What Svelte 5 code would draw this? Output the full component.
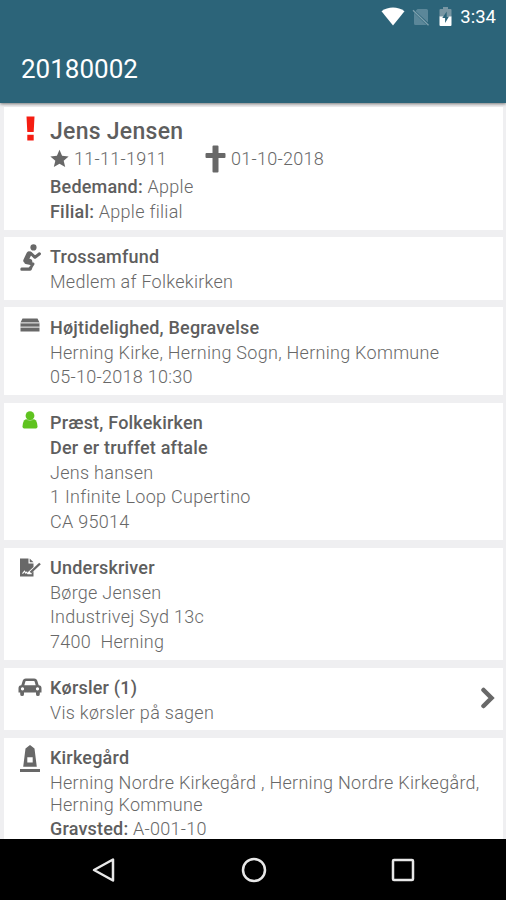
<script lang="ts">
  type Line = { label?: string; text?: string; wrap?: boolean };
  type Section = { icon: string; title: string; lines: Line[]; link?: boolean };

  const caseNumber = '20180002';

  const sections: Section[] = [
    { icon: 'pray', title: 'Trossamfund', lines: [{ text: 'Medlem af Folkekirken' }] },
    {
      icon: 'coffin',
      title: 'Højtidelighed, Begravelse',
      lines: [{ text: 'Herning Kirke, Herning Sogn, Herning Kommune' }, { text: '05-10-2018 10:30' }],
    },
    {
      icon: 'person',
      title: 'Præst, Folkekirken',
      lines: [
        { label: 'Der er truffet aftale' },
        { text: 'Jens hansen' },
        { text: '1 Infinite Loop Cupertino' },
        { text: 'CA 95014' },
      ],
    },
    {
      icon: 'sign',
      title: 'Underskriver',
      lines: [{ text: 'Børge Jensen' }, { text: 'Industrivej Syd 13c' }, { text: '7400  Herning' }],
    },
    { icon: 'car', title: 'Kørsler (1)', lines: [{ text: 'Vis kørsler på sagen' }], link: true },
    {
      icon: 'grave',
      title: 'Kirkegård',
      lines: [
        { text: 'Herning Nordre Kirkegård , Herning Nordre Kirkegård,\nHerning Kommune', wrap: true },
        { label: 'Gravsted:', text: 'A-001-10' },
      ],
    },
  ];
</script>

<div class="screen">
  <header class="top">
    <div class="status">
      <svg class="wifi" viewBox="0 0 24 19"><path d="M0.5 4.2C7-.8 17-.8 23.5 4.2L12 18.5z" fill="#fff" /></svg>
      <svg class="sim" viewBox="0 0 18 18">
        <path d="M5.5 1H14.5q1.5 0 1.5 1.5V14.5L3.5 3zM2 4.8L14.5 17H3.500Q2 17 2 15.5z" fill="#5b8799" />
        <path d="M1 2.2L16.5 17.2" stroke="#7fa1ae" stroke-width="1.3" />
      </svg>
      <svg class="battery" viewBox="0 0 13 19">
        <path d="M0.5 3Q0.5 2 1.5 2H4V0H9V2h2.5q1 0 1 1V10H0.5z" fill="#7896a3" />
        <path d="M0.5 9.5h12V18q0 1-1 1h-10q-1 0-1-1z" fill="#fff" />
        <path d="M7.7 4.5L3.3 11h2.800v5L10 9.500H7.700z" fill="#2c6479" />
      </svg>
      <span class="clock">3:34</span>
    </div>
    <h1>{caseNumber}</h1>
  </header>

  <main>
    <section class="card person-card">
      <div class="icon">
        <svg class="alert" viewBox="0 0 9 25"><path d="M0.5 0.5h8l-.8 15.5h-6.4zM1.3 18.8h6.4v5.700H1.3z" fill="#f51d12" /></svg>
      </div>
      <div class="body">
        <h2 class="name">Jens Jensen</h2>
        <div class="dates">
          <svg class="star" viewBox="0 0 20 19"><path d="M10 .4l2.700 6.300 6.900.6-5.200 4.500 1.600 6.700-6-3.500-6 3.500 1.600-6.700L.4 7.300l6.900-.6z" /></svg>
          <span class="born">11-11-1911</span>
          <svg class="cross" viewBox="0 0 20 28"><path d="M7 1.500Q7 .5 8 .5h4q1 0 1 1V8h6q1 0 1 1v3q0 1-1 1h-6v13.500q0 1-1 1H8q-1 0-1-1V13H1q-1 0-1-1V9q0-1 1-1h6z" /></svg>
          <span>01-10-2018</span>
        </div>
        <p><b>Bedemand:</b> Apple</p>
        <p><b>Filial:</b> Apple filial</p>
      </div>
    </section>

    {#each sections as section}
      <section class="card">
        <div class="icon">
          {#if section.icon === 'pray'}
            <svg class="pray" viewBox="0 0 21 27">
              <circle cx="13.5" cy="3.4" r="3.1" />
              <path d="M9 9.800L5.800 16.500l4 1" class="limb wide" />
              <path d="M10.5 9l4.500 4.300 4.500-3.500" class="limb" />
              <path d="M6 18.500L13 20l-3 4.500" class="limb" />
              <path d="M1.500 23.500H12.500l-1 2.500q-.5.800-1.500.8H1.500Q.3 26.800.3 25.200t1.200-1.700z" />
            </svg>
          {:else if section.icon === 'coffin'}
            <svg class="coffin" viewBox="0 0 20 14">
              <path d="M2.500 .5h15l2 4H.5zM.5 5.200h19v3.500H.5zM.5 9.500h19v4H.5z" />
              <path d="M1 4.800h18M1 9.200h18" stroke="#c5c5c5" />
            </svg>
          {:else if section.icon === 'person'}
            <svg class="person" viewBox="0 0 16 18">
              <path d="M2 9.500Q3.200 8 5 8h6q1.800 0 3 1.500 1.500 2.500 1.500 6 0 2-1.700 2H2.200Q.5 17.500.5 15.500.5 12 2 9.500z" />
              <circle cx="8" cy="4.7" r="4.4" />
              <path d="M4 8.200q4 3 8 0" fill="none" stroke="#a9dc8e" stroke-width=".7" />
            </svg>
          {:else if section.icon === 'sign'}
            <svg class="sign" viewBox="0 0 21 19">
              <path d="M0 .5h8.500v5h5V9L8 14v2h2.500l3-2.800v5.300H0z" />
              <path d="M9.700.5l3.800 3.800H9.700z" />
              <path d="M10.500 14.500L20 5.500" stroke="#686868" stroke-width="2.4" />
              <path d="M2.500 15.700l2-2.500 1.300 2 1-1 1 1.500h4" fill="none" stroke="#fff" stroke-width="1.1" />
            </svg>
          {:else if section.icon === 'car'}
            <svg class="car" viewBox="0 0 24 19">
              <path
                fill-rule="evenodd"
                d="M4.800 2.500Q5.500.5 7.700.5h8.600q2.200 0 2.900 2l1.500 4.700Q23.500 7.500 23.500 10v4.500H21.800v1.700a1.900 1.900 0 0 1-3.800 0v-1.700H6v1.700a1.900 1.900 0 0 1-3.800 0v-1.700H.5V10Q.5 7.500 3.300 7.200zM6.300 7.200h11.400L16.500 3.300Q16.400 2.900 16 2.900H8q-.4 0-.5.400zM4.500 9.300a1.600 1.600 0 1 0 .01 0M19.500 9.300a1.600 1.600 0 1 0 .01 0"
              />
            </svg>
          {:else}
            <svg class="grave" viewBox="0 0 20 27">
              <path fill-rule="evenodd" d="M5.500 3.500L10 0l4.500 3.500 2.300 18.300H3.200zM7.300 12.300v5.200h5.400v-5.200z" />
              <path d="M0 24h20v3H0z" />
            </svg>
          {/if}
        </div>
        <div class="body">
          <h2>{section.title}</h2>
          {#each section.lines as line}
            <p class:wrap={line.wrap}>{#if line.label}<b>{line.label}</b>{' '}{/if}{line.text ?? ''}</p>
          {/each}
        </div>
        {#if section.link}
          <svg class="chevron" viewBox="0 0 14 22"><path d="M2.500 3L10.500 11l-8 8" /></svg>
        {/if}
      </section>
    {/each}
  </main>

  <nav>
    <svg viewBox="0 0 26 26"><path d="M22 2.500v21L3 13z" /></svg>
    <svg viewBox="0 0 26 26"><circle cx="13" cy="13" r="11" /></svg>
    <svg viewBox="0 0 26 26"><rect x="3" y="3" width="20" height="20" rx="1" /></svg>
  </nav>
</div>

<style>
  :global(body) {
    margin: 0;
  }

  .screen {
    display: flex;
    flex-direction: column;
    width: 506px;
    height: 900px;
    overflow: hidden;
    background: #efeff1;
    color: #686868;
    font-family: Roboto, sans-serif;
    font-size: 18px;
    font-weight: 300;
    letter-spacing: 0.28px;
  }

  .top {
    flex: none;
    height: 103px;
    background: #2c6479;
    box-shadow: 0 1px 3px rgba(0, 0, 0, 0.5);
    color: #fff;
    letter-spacing: 0;
    z-index: 1;
  }

  .status {
    display: flex;
    align-items: center;
    justify-content: flex-end;
    height: 33px;
    padding-right: 10px;
  }

  .wifi {
    width: 24px;
    height: 19px;
    margin-right: 7px;
  }

  .sim {
    width: 18px;
    height: 18px;
    margin-right: 9px;
  }

  .battery {
    width: 13px;
    height: 19px;
    margin-right: 8px;
  }

  .clock {
    font-size: 18.5px;
    font-weight: 400;
  }

  h1 {
    margin: 20px 0 0 21px;
    font-size: 26px;
    font-weight: 400;
    line-height: 32px;
  }

  main {
    flex: 1;
    min-height: 0;
    overflow: hidden;
    padding: 4px 3px 0 4px;
  }

  .card {
    display: flex;
    box-sizing: border-box;
    margin-bottom: 7.5px;
    padding: 8.3px 0 4.9px;
    background: #fff;
  }

  .icon {
    flex: none;
    display: flex;
    justify-content: center;
    align-items: flex-start;
    width: 46px;
    height: 0;
    padding-left: 6px;
    box-sizing: border-box;
  }

  .icon svg {
    flex: none;
  }

  svg {
    fill: #686868;
  }

  .body {
    flex: 1;
    min-width: 0;
  }

  h2,
  p {
    margin: 0;
    font-size: 18px;
    line-height: 24.85px;
    white-space: pre;
  }

  h2,
  b {
    color: #5e5e5e;
    font-weight: 500;
    letter-spacing: 0.2px;
  }

  .wrap {
    line-height: 21.5px;
    padding: 1.2px 0 1.6px;
  }

  .person-card {
    height: 122.5px;
  }

  h2.name {
    font-size: 23px;
    line-height: 33px;
    letter-spacing: 0.27px;
  }

  .dates {
    display: flex;
    align-items: center;
    height: 21px;
    margin-bottom: 6px;
  }

  .star {
    width: 19px;
    height: 19px;
    margin-right: 5px;
  }

  .born {
    width: 131px;
  }

  .cross {
    width: 21px;
    height: 28px;
    margin-right: 5px;
  }

  .alert {
    width: 9px;
    height: 25px;
    margin-top: 1px;
  }

  .pray {
    width: 21px;
    height: 27px;
    margin-top: -1px;
  }

  .limb {
    fill: none;
    stroke: #686868;
    stroke-width: 3;
    stroke-linecap: round;
    stroke-linejoin: round;
  }

  .wide {
    stroke-width: 5;
  }

  .coffin {
    width: 20px;
    height: 14px;
    margin-top: 2px;
  }

  .person {
    width: 16px;
    height: 18px;
  }

  .icon .person {
    fill: #5fc31f;
  }

  .sign {
    width: 21px;
    height: 19px;
    margin-top: 2px;
  }

  .car {
    width: 24px;
    height: 19px;
    margin-top: 2px;
  }

  .grave {
    width: 20px;
    height: 27px;
    margin-top: -1px;
  }

  .chevron {
    align-self: center;
    width: 14px;
    height: 22px;
    margin: -6px 8px 0 0;
    fill: none;
    stroke: #686868;
    stroke-width: 4.5;
    stroke-linecap: round;
  }

  nav {
    flex: none;
    display: flex;
    align-items: center;
    justify-content: space-between;
    box-sizing: border-box;
    height: 61px;
    padding: 0 90px 0 91px;
    background: #000;
    z-index: 1;
  }

  nav svg {
    width: 26px;
    height: 26px;
    fill: none;
    stroke: #e8e8e8;
    stroke-width: 2.5;
    stroke-linejoin: round;
  }
</style>
